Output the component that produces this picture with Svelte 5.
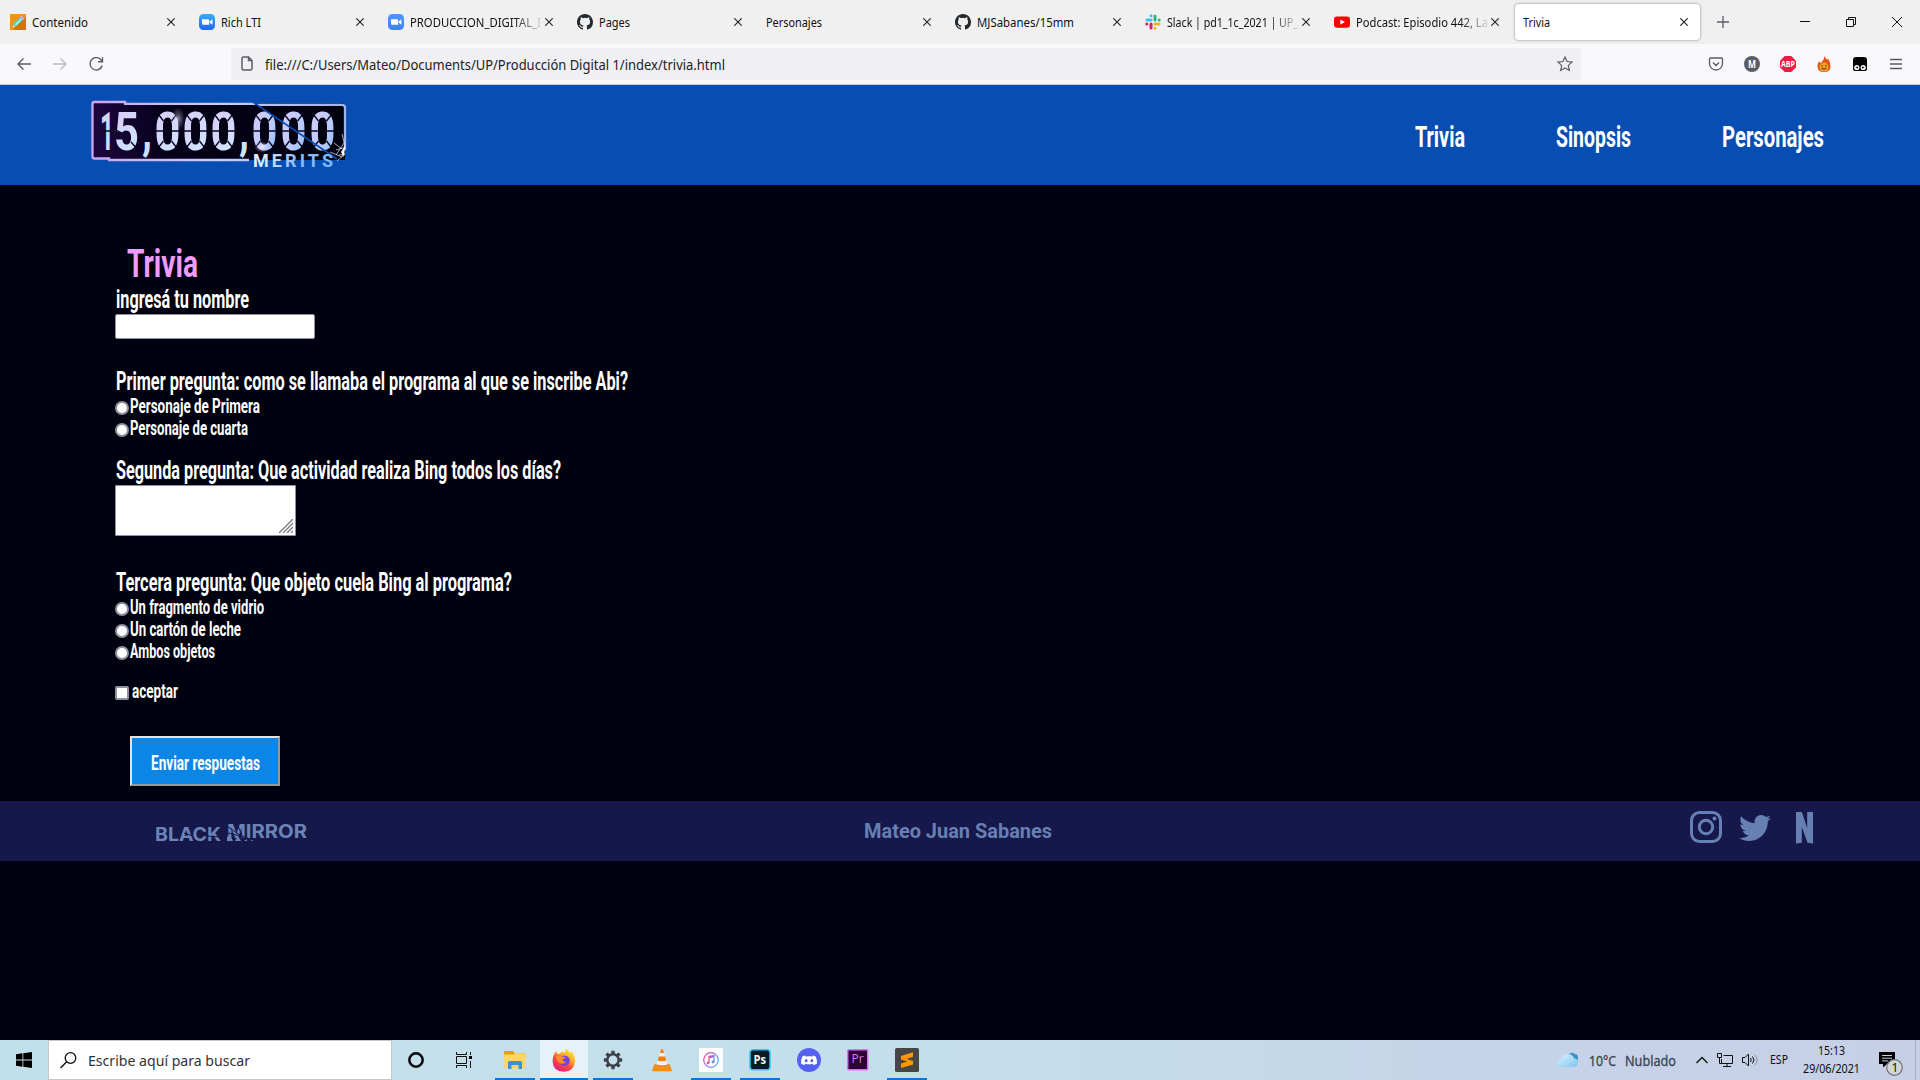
<script>
  const tabs = [
    { icon: 'pencil', text: 'Contenido', w: 56 },
    { icon: 'zoom', text: 'Rich LTI', w: 40 },
    { icon: 'zoom2', text: 'PRODUCCION_DIGITAL_I', w: 131, fade: true },
    { icon: 'github', text: 'Pages', w: 31 },
    { icon: '', text: 'Personajes', w: 56 },
    { icon: 'github', text: 'MJSabanes/15mm', w: 97 },
    { icon: 'slack', text: 'Slack | pd1_1c_2021 | UP_', w: 131, fade: true },
    { icon: 'youtube', text: 'Podcast: Episodio 442, La', w: 132, fade: true },
    { icon: '', text: 'Trivia', w: 27, active: true }
  ];
  const apps = [
    { icon: 'explorer', open: true },
    { icon: 'firefox', open: true, active: true },
    { icon: 'gear', open: true },
    { icon: 'vlc' },
    { icon: 'itunes', open: true },
    { icon: 'ps', open: true },
    { icon: 'discord' },
    { icon: 'pr' },
    { icon: 'sublime', open: true }
  ];
  const first = [['Personaje de Primera', 130], ['Personaje de cuarta', 118]];
  const third = [['Un fragmento de vidrio', 134], ['Un cartón de leche', 111], ['Ambos objetos', 85]];
  const digits = [
    ['5', 114, 25], ['0', 154.5, 26], ['0', 182.5, 26], ['0', 210.5, 26],
    ['0', 251.5, 26], ['0', 280.5, 26], ['0', 309.5, 26]
  ];
  const teeth = [0, 45, 90, 135, 180, 225, 270, 315];
</script>

{#snippet fit(text, w, h, base, size, cls)}
  <svg class="fit {cls}" width={w} height={h}>
    <text x="0" y={base} font-size={size} textLength={w} lengthAdjust="spacingAndGlyphs">{text}</text>
  </svg>
{/snippet}

{#snippet favicon(name)}
  <svg class="favicon" width="16" height="16" viewBox="0 0 16 16">
    {#if name === 'pencil'}
      <rect width="16" height="16" fill="#f39314" />
      <path d="M16 4v12H3L12 3z" fill="#cf7508" />
      <path d="M2.5 13.5l1-4 7-7 3 3-7 7z" fill="#55c9b4" />
      <path d="M4.5 10.5l6.5-6.5 1.3 1.3-6.4 6.5z" fill="#a9efdc" />
      <path d="M10 3l1.5-1.6 3 3L13 6z" fill="#d9a6ee" />
      <path d="M2.5 13.5l.7-2.6 2 2z" fill="#f5e1c2" />
    {:else if name === 'zoom' || name === 'zoom2'}
      <defs><linearGradient id="g{name}" x2="0" y2="1"><stop stop-color={name === 'zoom' ? '#30aefc' : '#4a97ff'} /><stop offset="1" stop-color={name === 'zoom' ? '#2365f5' : '#3d82f7'} /></linearGradient></defs>
      <rect width="16" height="16" rx="4.5" fill="url(#g{name})" />
      <path d="M3 5.2h6q1.2 0 1.2 1.2v4.4H4.3Q3 10.8 3 9.5zM10.8 7.2L13.5 5.2v5.5l-2.7-1.9z" fill="#fff" />
    {:else if name === 'github'}
      <path fill="#24292e" d="M8 0C3.58 0 0 3.58 0 8c0 3.54 2.29 6.53 5.47 7.59.4.07.55-.17.55-.38 0-.19-.01-.82-.01-1.49-2.01.37-2.53-.49-2.69-.94-.09-.23-.48-.94-.82-1.13-.28-.15-.68-.52-.01-.53.63-.01 1.08.58 1.23.82.72 1.21 1.87.87 2.33.66.07-.52.28-.87.51-1.07-1.78-.2-3.64-.89-3.64-3.95 0-.87.31-1.59.82-2.15-.08-.2-.36-1.02.08-2.12 0 0 .67-.21 2.2.82a7.4 7.4 0 014 0c1.53-1.04 2.2-.82 2.2-.82.44 1.1.16 1.92.08 2.12.51.56.82 1.27.82 2.15 0 3.07-1.87 3.75-3.65 3.95.29.25.54.73.54 1.48 0 1.07-.01 1.93-.01 2.2 0 .21.15.46.55.38A8.01 8.01 0 0016 8c0-4.42-3.58-8-8-8z" />
    {:else if name === 'slack'}
      <g stroke-width="3" stroke-linecap="round">
        <path d="M6 1.8v0M2 6h4" stroke="#36c5f0" /><path d="M10 2v4M14.2 6v0" stroke="#2eb67d" />
        <path d="M10 10h4M10 14.2v0" stroke="#ecb22e" /><path d="M6 10v4M1.8 10v0" stroke="#e01e5a" />
      </g>
    {:else if name === 'youtube'}
      <rect y="2.4" width="16" height="11.4" rx="3" fill="#f00" /><path d="M6.3 5.4v5.4L11 8.1z" fill="#fff" />
    {/if}
  </svg>
{/snippet}

{#snippet app(name)}
  <svg width="24" height="24" viewBox="0 0 24 24">
    {#if name === 'explorer'}
      <path d="M1.2 3h9l1.5 2.5H22.5V9H1.2z" fill="#dea20a" /><path d="M1.2 6.5H11l1-1h10.5V20.5H1.2z" fill="#ffd664" />
      <path d="M5 21v-6.5q0-1.5 1.5-1.5h11q1.5 0 1.5 1.5V21h-3.5v-4h-7v4z" fill="#3c91d0" />
    {:else if name === 'firefox'}
      <defs>
        <linearGradient id="ffa" x1=".85" y1="0" x2=".2" y2="1"><stop stop-color="#fff44f" /><stop offset=".35" stop-color="#ffae20" /><stop offset=".62" stop-color="#ff4840" /><stop offset="1" stop-color="#e31587" /></linearGradient>
      </defs>
      <path d="M2.5 5.5Q3.5 3.5 4 3l1.5 3 2.5-.5Q9 3.5 11 3q-.5 1 0 2 2-.3 3-4.5 2.5 1.5 4 4.5l1-2q4.5 4 4 10.5-.8 9.8-11 10.3Q1 23.500.6 13.500.5 8.500 2.500 5.500z" fill="url(#ffa)" />
      <circle cx="12.500" cy="12.800" r="5.300" fill="#7545dd" /><path d="M4 8q4-1.500 6 .8h3.500q-.3 2-3 2.700.5 2.500 3.500 2.500-3 3-6.500 1Q4.500 13 4 8z" fill="#ff8f25" />
    {:else if name === 'gear'}
      <g fill="#3b4147">{#each teeth as a}<rect x="10.300" y="2.800" width="3.400" height="4" rx=".6" transform="rotate({a} 12 12)" />{/each}</g>
      <circle cx="12" cy="12" r="5.700" fill="none" stroke="#3b4147" stroke-width="2.500" />
    {:else if name === 'vlc'}
      <path d="M4.500 16h15l2.500 6.500q0 .7-1 .7H3q-1 0-1-.7z" fill="#f78c12" /><path d="M11 1.500q1-1 2 0L18 18q-6 3-12 0z" fill="#f2eee9" />
      <path d="M11 1.500q1-1 2 0l1 3.500h-4zM8.900 8.500h6.200l1.200 4q-4.300 1.500-8.600 0z" fill="#ef7d08" /><path d="M6.500 16.500q5.500 2 11 0l.5 1.500q-6 3-12 0z" fill="#ef7d08" />
    {:else if name === 'itunes'}
      <defs><linearGradient id="it" x2="1" y2=".6"><stop stop-color="#ed5078" /><stop offset=".5" stop-color="#a865db" /><stop offset="1" stop-color="#4daaf0" /></linearGradient></defs>
      <rect width="24" height="24" fill="#fff" /><circle cx="12" cy="12" r="7.300" fill="none" stroke="url(#it)" stroke-width="1.200" />
      <path d="M10 15V8.500l5-1V14M10 9.500l5-1" fill="none" stroke="url(#it)" stroke-width="1.300" /><circle cx="9" cy="15" r="1.400" fill="#d55aa5" /><circle cx="14" cy="14" r="1.400" fill="#758be5" />
    {:else if name === 'ps'}
      <rect x="2" y="1.800" width="20" height="20" rx="3" fill="#061d26" stroke="#2bc4f3" stroke-width="1.500" /><text x="5.500" y="15.800" font-size="12" textLength="12.500" lengthAdjust="spacingAndGlyphs" fill="#eefaff" class="bold">Ps</text>
    {:else if name === 'discord'}
      <circle cx="12" cy="12" r="12" fill="#5562f0" />
      <path d="M8 7.500q-2 .4-2.700 1Q3.800 12 4 15.500q1.500 1.300 3.500 1.500l.8-1.300q3.700 1 7.400 0l.8 1.300q2-.2 3.500-1.500.2-3.500-1.300-7-.7-.6-2.700-1l-.6 1q-3.400-.5-6.800 0z" fill="#fff" /><ellipse cx="9.200" cy="12.700" rx="1.400" ry="1.600" fill="#5562f0" /><ellipse cx="14.800" cy="12.700" rx="1.400" ry="1.600" fill="#5562f0" />
    {:else if name === 'pr'}
      <rect x="1.700" y="1.700" width="20" height="20" rx="1" fill="#2a0133" stroke="#e06cf7" stroke-width="1.500" /><text x="5.500" y="15" font-size="12" textLength="12" lengthAdjust="spacingAndGlyphs" fill="#e378f7">Pr</text>
    {:else if name === 'sublime'}
      <rect width="24" height="24" rx="1.500" fill="#464646" /><path d="M6 8l12-3.800v4.500L11.500 11 18 13v3.500L6 20v-4.500l6.500-2L6 11.500z" fill="#ff9800" />
    {/if}
  </svg>
{/snippet}

{#snippet radio(text, w)}
  <label class="option"><span class="dot"></span>{@render fit(text, w, 22, 16, 19.5, 'game')}</label>
{/snippet}

<div class="screen">
  <div class="tabbar">
    {#each tabs as t}
      <div class="tab" class:active={t.active}>
        {#if t.icon}{@render favicon(t.icon)}{/if}
        <div class="tabtext" class:fade={t.fade}>{@render fit(t.text, t.w, 36, 23, 12, 'ui')}</div>
        <svg class="close" width="8" height="8" viewBox="0 0 8 8"><path d="M.3.3l7.400 7.400M7.700.3L.3 7.700" /></svg>
      </div>
    {/each}
    <svg class="plus" width="12" height="12" viewBox="0 0 12 12"><path d="M6 0v12M0 6h12" /></svg>
    <div class="controls">
      <svg width="10" height="10" viewBox="0 0 10 10"><path d="M0 4.500h10" /></svg>
      <svg width="10" height="10" viewBox="0 0 10 10"><path d="M2.500 2.500v-2h7v7h-2M.5 2.500h7v7h-7z" /></svg>
      <svg width="10" height="10" viewBox="0 0 10 10"><path d="M0 0l10 10M10 0L0 10" /></svg>
    </div>
  </div>

  <div class="toolbar">
    <svg class="nav" width="14" height="14" viewBox="0 0 14 14"><path d="M14 7H1M6.500 1.500L1 7l5.500 5.500" /></svg>
    <svg class="nav dim" width="14" height="14" viewBox="0 0 14 14"><path d="M0 7h13M7.500 1.500L13 7l-5.500 5.500" /></svg>
    <svg class="nav" width="15" height="14" viewBox="0 0 15 14"><path d="M12.800 4A6.200 6.200 0 1 0 13.200 8.500M9 4.800h4.500V.2" /></svg>
    <div class="url">
      <svg width="12" height="15" viewBox="0 0 12 15"><path d="M1 2.500Q1 1 2.500 1H7.500L11 4.500v8Q11 14 9.500 14h-7Q1 14 1 12.500zM7.500 1v3.500H11" /></svg>
      {@render fit('file:///C:/Users/Mateo/Documents/UP/Producción Digital 1/index/trivia.html', 460, 32, 22, 13.5, 'ui address')}
      <svg class="star" width="16" height="16" viewBox="0 0 16 16"><path d="M8 1l2 4.500 5 .6-3.700 3.300 1 5L8 12l-4.300 2.400 1-5L1 6.100l5-.6z" /></svg>
    </div>
    <div class="extensions">
      <svg width="16" height="16" viewBox="0 0 16 16"><path d="M2.500 2h11q1 0 1 1v4.500a6.500 6.500 0 0 1-13 0V3q0-1 1-1zM5 6.500l3 3 3-3" fill="none" stroke="#5b5b66" stroke-width="1.300" /></svg>
      <svg width="16" height="16" viewBox="0 0 16 16"><circle cx="8" cy="8" r="8" fill="#5b5b66" /><text x="4" y="12" font-size="11" textLength="8" lengthAdjust="spacingAndGlyphs" fill="#fff" class="bold">M</text></svg>
      <svg width="16" height="16" viewBox="0 0 16 16"><path d="M4.700 0h6.600L16 4.700v6.600L11.300 16H4.700L0 11.300V4.700z" fill="#ed1e45" /><text x="1" y="11.200" font-size="8.500" textLength="14" lengthAdjust="spacingAndGlyphs" fill="#fff" class="bold">ABP</text></svg>
      <svg width="16" height="16" viewBox="0 0 16 16"><path d="M8.500 0q1 2.500 3 4 .5-1 .2-2Q14.500 6 14.500 10q0 6-6.500 6T1.500 10q0-2.500 1.800-5 .2 1.300 1 2Q8 4.500 8.500 0z" fill="#e4521b" /><circle cx="8" cy="11" r="4.500" fill="#f7a120" /><path d="M6 9v1.500M10 9v1.500M5.500 12q2.500 2.500 5 0" stroke="#4c2510" fill="none" /></svg>
      <svg width="16" height="16" viewBox="0 0 16 16"><path d="M1 4q0-3 3-3h8q3 0 3 3v9q0 2-2 2H3q-2 0-2-2z" fill="#050505" /><circle cx="4.800" cy="11.500" r="2.600" fill="#fff" /><circle cx="11.200" cy="11.500" r="2.600" fill="#fff" /><circle cx="5.200" cy="11.500" r="1" /><circle cx="10.800" cy="11.500" r="1" /></svg>
      <svg width="16" height="16" viewBox="0 0 16 16"><path d="M2 3.500h12M2 8h12M2 12.500h12" stroke="#5b5b66" stroke-width="1.300" /></svg>
    </div>
  </div>

  <header>
    <svg class="merits" width="260" height="72" viewBox="90 98 260 72">
      <defs>
        <linearGradient id="frame" x2="1"><stop stop-color="#caa6f0" /><stop offset=".5" stop-color="#c8cdfa" /><stop offset="1" stop-color="#9eb4ef" /></linearGradient>
        <linearGradient id="panel" x2="1"><stop stop-color="#1d0640" /><stop offset=".3" stop-color="#050118" /><stop offset="1" stop-color="#02020e" /></linearGradient>
        <linearGradient id="digit" x2=".4" y2="1"><stop stop-color="#d9c8f5" /><stop offset="1" stop-color="#cfe4ff" /></linearGradient>
        <linearGradient id="digitb" x2="1" y2="1"><stop stop-color="#d9ccf9" /><stop offset=".6" stop-color="#bacbfb" /><stop offset="1" stop-color="#78b4f5" /></linearGradient>
        <linearGradient id="merits" x2="1"><stop stop-color="#eef6ff" /><stop offset=".55" stop-color="#8fbcfa" /><stop offset="1" stop-color="#7bb8f7" /></linearGradient>
        <radialGradient id="glow"><stop stop-color="#fff" /><stop offset=".4" stop-color="#e8ddff" stop-opacity=".5" /><stop offset="1" stop-color="#cdb6ff" stop-opacity="0" /></radialGradient>
      </defs>
      <path d="M94 102H125v1.500H343q2 0 2 2V160H250L109 160V158.500H94q-2 0-2-2V104q0-2 2-2z" fill="url(#panel)" />
      <path d="M249 160H109V158.500H94.500q-2 0-2-2V104q0-2 2-2H125v1.800H255M257 104.800H342q3 0 3 3V150" fill="none" stroke="url(#frame)" stroke-width="2.300" />
      <g class="digits" font-size="53">
        <text x="100" y="150" textLength="14" lengthAdjust="spacingAndGlyphs" fill="url(#digit)">1</text>
        {#each digits as [d, x, w]}
          <text {x} y="150" textLength={w} lengthAdjust="spacingAndGlyphs" fill={x > 250 ? 'url(#digitb)' : 'url(#digit)'}>{d}</text>
        {/each}
        <text x="142" y="148" textLength="10" lengthAdjust="spacingAndGlyphs" fill="#cfe0ff">,</text><text x="239" y="148" textLength="10" lengthAdjust="spacingAndGlyphs" fill="#cfe0ff">,</text>
      </g>
      <g stroke="#07031c" stroke-width="1.300">
        {#each digits as [d, x]}
          {#if d === '0'}<path d="M{x} 131h9M{x + 17} 131h9M{x + 2} 112l7 9M{x + 24} 112l-7 9M{x + 2} 150l7-9M{x + 24} 150l-7-9" />{/if}
        {/each}
        <path d="M104 131h10M138 150l-7-8M116 130l6 3" />
      </g>
      <path d="M253 102l84 57" stroke="#084db2" stroke-width="1.700" />
      <ellipse cx="178" cy="119" rx="7" ry="12" fill="url(#glow)" opacity=".6" /><ellipse cx="262" cy="147" rx="8" ry="6" fill="url(#glow)" opacity=".8" />
      <path d="M334 143l8 6M336 150l10-3M330 152l12 5M344 143l-8 12M337 161l8-7-6 1M342 134l3 12-3 10" fill="none" stroke="#e8eaff" stroke-width=".7" />
      <path d="M341 152l4-6-1 11z" fill="#fff" />
      <text x="253" y="167" font-size="18" textLength="80" fill="url(#merits)" class="meritstext">MERITS</text>
    </svg>
    <nav>
      {@render fit('Trivia', 50, 40, 27, 29, 'game')}
      {@render fit('Sinopsis', 75, 40, 27, 29, 'game')}
      {@render fit('Personajes', 102, 40, 27, 29, 'game')}
    </nav>
  </header>

  <main>
    <div class="title">{@render fit('Trivia', 71, 47, 37, 39, 'game pink')}</div>
    {@render fit('ingresá tu nombre', 133, 27, 21, 25, 'game')}
    <div class="input"></div>
    <section class="first">
      {@render fit('Primer pregunta: como se llamaba el programa al que se inscribe Abi?', 512, 30, 23, 25, 'game')}
      {#each first as [t, w]}{@render radio(t, w)}{/each}
    </section>
    <section class="second">
      {@render fit('Segunda pregunta: Que actividad realiza Bing todos los días?', 445, 29, 23, 25, 'game')}
      <div class="textarea"><svg width="14" height="14" viewBox="0 0 14 14"><path d="M0 14L14 0M4 14L14 4M8 14l6-6M12 14l2-2" stroke="#777784" stroke-width="1.300" /></svg></div>
    </section>
    <section class="third">
      {@render fit('Tercera pregunta: Que objeto cuela Bing al programa?', 396, 30, 23, 25, 'game')}
      {#each third as [t, w]}{@render radio(t, w)}{/each}
    </section>
    <label class="option accept"><span class="box"></span>{@render fit('aceptar', 46, 22, 16, 19.5, 'game')}</label>
    <div class="send">{@render fit('Enviar respuestas', 109, 46, 32, 19.5, 'game')}</div>
  </main>

  <footer>
    <div class="mirror">
      <svg width="152" height="24" viewBox="0 0 152 24">
        <g fill="#6b84b6" class="mirrortext" font-size="19">
          <text x="-1" y="19" textLength="66" lengthAdjust="spacingAndGlyphs">BLACK</text>
          <text x="71" y="16" textLength="80" lengthAdjust="spacingAndGlyphs">MIRROR</text>
        </g>
        <path d="M28 11l9 3M50 14l16 1M71 4l14 10M72 11l20 5M82 4l6 14" stroke="#16174b" stroke-width="1" />
        <path d="M71 19v-4l3-2 3 6zM79 19l3-5 3 5zM88 19h3v-2zM94 19h3v-1z" fill="#6b84b6" />
      </svg>
    </div>
    {@render fit('Mateo Juan Sabanes', 188, 30, 22, 19.5, 'author')}
    <div class="social">
      <svg width="32" height="32" viewBox="0 0 32 32"><rect x="1.500" y="1.500" width="29" height="29" rx="8" fill="none" stroke="#6780b3" stroke-width="3" /><circle cx="16" cy="16" r="6.700" fill="none" stroke="#6780b3" stroke-width="3" /><circle cx="24.500" cy="7.500" r="2" fill="#6780b3" /></svg>
      <svg class="bird" width="32" height="32" viewBox="0 0 512 512"><path fill="#6780b3" d="M459.370 151.716c.325 4.548.325 9.097.325 13.645 0 138.720-105.583 298.558-298.558 298.558-59.452 0-114.680-17.219-161.137-47.106 8.447.974 16.568 1.299 25.340 1.299 49.055 0 94.213-16.568 130.274-44.832-46.132-.975-84.792-31.188-98.112-72.772 6.498.974 12.995 1.624 19.818 1.624 9.421 0 18.843-1.300 27.614-3.573-48.081-9.747-84.143-51.980-84.143-102.985v-1.299c13.969 7.797 30.214 12.670 47.431 13.319-28.264-18.843-46.781-51.005-46.781-87.391 0-19.492 5.197-37.360 14.294-52.954 51.655 63.675 129.300 105.258 216.365 109.807-1.624-7.797-2.599-15.918-2.599-24.040 0-57.828 46.782-104.934 104.934-104.934 30.213 0 57.502 12.670 76.670 33.137 23.715-4.548 46.456-13.320 66.599-25.340-7.798 24.366-24.366 44.833-46.132 57.827 21.117-2.273 41.584-8.122 60.426-16.243-14.292 20.791-32.161 39.308-52.628 54.253z" /></svg>
      <svg class="netflix" width="17" height="32" viewBox="0 0 17 32"><path d="M0 0h5.800l5.400 16V0H17v31.500l-5.500-.8L5.800 15v15.800L0 31.500z" fill="#6780b3" /></svg>
    </div>
  </footer>

  <div class="spacer"></div>

  <div class="taskbar">
    <div class="start"><svg width="16" height="16" viewBox="0 0 16 16"><path d="M0 2.200L6.500 1.300v6.200H0zM7.300 1.200L16 0v7.500H7.300zM0 8.400h6.500v6.300L0 13.800zM7.300 8.400H16V16l-8.700-1.200z" /></svg></div>
    <div class="search">
      <svg width="17" height="17" viewBox="0 0 17 17"><circle cx="10.500" cy="6" r="5.300" fill="none" stroke="#111" stroke-width="1.300" /><path d="M6.700 9.700L.5 16" stroke="#111" stroke-width="1.400" /></svg>
      {@render fit('Escribe aquí para buscar', 162, 38, 25, 15, 'ui query')}
    </div>
    <div class="slot"><svg width="18" height="18" viewBox="0 0 18 18"><circle cx="9" cy="9" r="6.700" fill="none" stroke="#080808" stroke-width="2.500" /></svg></div>
    <div class="slot view"><svg width="16" height="16" viewBox="0 0 16 16"><path d="M.5 0v2.500h10V0M.5 16v-2.500h10V16M.5 4.500h10v7H.5zM14.500 0v3M14.500 9v7" fill="none" stroke="#111" /><path d="M13 4h3v3h-3z" /></svg></div>
    {#each apps as a}
      <div class="app" class:current={a.active} class:open={a.open}>{@render app(a.icon)}</div>
    {/each}
    <div class="tray">
      <svg class="cloud" width="22" height="16" viewBox="0 0 22 16"><defs><linearGradient id="cl" x2="1" y2="1"><stop stop-color="#d9f5ff" /><stop offset="1" stop-color="#80c3ec" /></linearGradient></defs><path d="M11 3Q14-1 18 2q3 0 3 4 0 5-3 6z" fill="#3f91cb" /><path d="M4 15Q0 15 0 11.500T4.500 8Q5 2 10.500 2t6.500 4.500q4 0 4 4T17 15z" fill="url(#cl)" /></svg>
      {@render fit('10°C', 27, 40, 26, 13.5, 'ui weather')}
      {@render fit('Nublado', 51, 40, 26, 13.5, 'ui weather')}
      <svg class="chevron" width="12" height="8" viewBox="0 0 12 8"><path d="M.5 7L6 1.500 11.500 7" fill="none" stroke="#111" stroke-width="1.300" /></svg>
      <svg class="net" width="16" height="15" viewBox="0 0 16 15"><path d="M6.500 2.500h9v8h-11V6M10 10.500v3M6 13.500h8M.5.5h4v4h-4zM2.500 4.500v6h2" fill="none" stroke="#111" /></svg>
      <svg class="sound" width="17" height="14" viewBox="0 0 17 14"><path d="M.5 4.500H3L6.500 1v12L3 9.500H.5zM8.500 5q1.500 2 0 4M10.500 3.500q3 3.500 0 7" fill="none" stroke="#111" /><path d="M12.800 1.800q4.700 5.200 0 10.400" fill="none" stroke="#8c93a3" /></svg>
      {@render fit('ESP', 18, 40, 24, 12, 'ui esp')}
      <div class="clock">
        {@render fit('15:13', 27, 18, 15, 12, 'ui')}
        {@render fit('29/06/2021', 57, 18, 15, 12, 'ui')}
      </div>
      <svg class="action" width="25" height="26" viewBox="0 0 25 26"><path d="M0 1h16v12H8l-4 3.500V13H0z" /><path d="M3 4.500h10M3 7.200h10M3 9.900h6" stroke="#c6d1e6" /><circle cx="15.500" cy="16.500" r="7.800" fill="#d2d5da" stroke="#777" stroke-width="1.200" /><text x="12.500" y="21" font-size="12" class="ui">1</text></svg>
      <div class="peek"></div>
    </div>
  </div>
</div>

<style>
  :global(body) { margin: 0; background: #00020f; overflow: hidden; }
  .screen { width: 1920px; height: 1080px; display: flex; flex-direction: column; background: #00020f; font-family: "Open Sans", "Noto Sans", sans-serif; }
  svg { display: block; flex: none; }
  .fit { overflow: visible; }
  .ui { font-family: "Noto Sans", "Open Sans", sans-serif; fill: #111; }
  .bold { font-family: "Open Sans", sans-serif; font-weight: 700; }
  .game { font-family: Roboto, sans-serif; font-weight: 700; fill: #fff; }
  .pink { fill: #f29bff; }

  .tabbar { height: 44px; display: flex; align-items: center; background: #f0f0f0; padding-left: 2px; box-sizing: border-box; flex: none; }
  .tab { width: 185.1px; height: 36px; margin-right: 4px; padding: 0 12px 0 8px; box-sizing: border-box; display: flex; align-items: center; border-radius: 4px; }
  .tab.active { background: #fff; box-shadow: 0 0 3px #888; }
  .favicon { margin-right: 6px; }
  .tabtext { flex: 1; overflow: hidden; }
  .fade { mask-image: linear-gradient(to right, #000 77%, transparent 100%); }
  .close { stroke: #222; stroke-width: 1.1; }
  .plus { margin-left: 13px; stroke: #5b5b66; stroke-width: 1.3; fill: none; }
  .controls { display: flex; gap: 36px; margin-left: 71px; fill: none; stroke: #111; stroke-width: 1; }

  .toolbar { height: 41px; flex: none; display: flex; align-items: center; box-sizing: border-box; padding: 0 16px 1px 17px; background: #f9f9fb; border-bottom: 1px solid #c9c9cf; }
  .nav { margin-right: 22px; fill: none; stroke: #5b5b66; stroke-width: 1.4; }
  .dim { stroke: #bbbbc2; }
  .url { width: 1350px; height: 32px; margin-left: 105px; display: flex; align-items: center; box-sizing: border-box; padding: 0 8px 0 10px; background: #f0f0f4; border-radius: 4px; fill: none; stroke: #5b5b66; stroke-width: 1.5; }
  .address { margin-left: 12px; fill: #222; stroke: none; }
  .star { margin-left: auto; stroke-width: 1.2; }
  .extensions { display: flex; gap: 20px; margin-left: auto; }

  header { height: 100px; flex: none; display: flex; justify-content: space-between; background: #084db2; box-sizing: border-box; padding: 13px 96px 0 90px; }
  .digits { font-family: Roboto, sans-serif; font-weight: 700; }
  .meritstext { font-family: Roboto, sans-serif; font-weight: 700; }
  nav { display: flex; padding-top: 22px; gap: 91px; }

  main { height: 616px; flex: none; box-sizing: border-box; padding: 55px 0 0 115px; }
  main .fit { margin-left: .5px; }
  .title { padding-left: 11px; }
  .input { width: 200px; height: 25px; box-sizing: border-box; background: #fff; border: 1px solid #8f8f9d; border-radius: 2px; }
  .first { margin-top: 28px; }
  .second { margin-top: 15px; }
  .third { margin-top: 32px; }
  .option { display: flex; align-items: center; height: 22px; }
  .dot { width: 14px; height: 14px; box-sizing: border-box; border: 2px solid #8f8f9d; border-radius: 50%; background: #fff; }
  .box { width: 14px; height: 14px; box-sizing: border-box; border: 2px solid #8f8f9d; border-radius: 2px; background: #fff; margin-right: 2.5px; }
  .accept { margin-top: 18px; }
  .textarea { width: 181px; height: 51px; box-sizing: border-box; background: #fff; border: 1px solid #8f8f9d; border-radius: 1px; display: flex; justify-content: flex-end; align-items: flex-end; padding: 2px; }
  .send { width: 150px; height: 50px; box-sizing: border-box; margin: 32px 0 0 15px; border: 2px solid; border-color: #e3e3e3 #979797 #979797 #e3e3e3; background: #0c86e6; display: flex; padding-left: 18px; }

  footer { height: 60px; flex: none; display: grid; grid-template-columns: 864px 188px 1fr; background: #16174b; }
  .mirror { padding: 21px 0 0 156px; }
  .mirrortext { font-family: Inter, sans-serif; font-weight: 700; }
  .author { font-family: Roboto, sans-serif; font-weight: 700; fill: #6780b3; margin-top: 15px; }
  .social { display: flex; padding: 10px 107px 0 0; justify-content: flex-end; }
  .bird { margin: 1px 25px 0 17px; }
  .netflix { margin-top: 1px; }
  .spacer { flex: 1; }

  .taskbar { height: 40px; flex: none; display: flex; background: linear-gradient(90deg, #c1e0eb, #c4dfeb 50%, #c5d3e8 80%, #c6cfe5); }
  .start { width: 48px; display: grid; place-items: center; }
  .search { width: 344px; box-sizing: border-box; border: 1px solid #c6c6c6; background: #fff; display: flex; align-items: center; padding-left: 11px; }
  .query { margin-left: 11px; fill: #333; }
  .slot { width: 48px; display: grid; place-items: center; }
  .view { margin-right: 3px; }
  .app { width: 48px; margin-right: 1px; box-sizing: border-box; display: flex; justify-content: center; padding-top: 8px; }
  .app.open { background: linear-gradient(#0078d7, #0078d7) center bottom / 40px 2px no-repeat; }
  .app.current { background: linear-gradient(#0078d7, #0078d7) center bottom / 48px 2px no-repeat, #e6f2f8; }
  .tray { flex: 1; display: flex; align-items: center; justify-content: flex-end; }
  .weather { fill: #3c4654; stroke: #3c4654; stroke-width: .3; margin-left: 9.5px; }
  .chevron { margin-left: 20px; }
  .net { margin-left: 9px; }
  .sound { margin-left: 9px; }
  .esp { margin-left: 11px; }
  .clock { margin-left: 15px; display: flex; flex-direction: column; align-items: center; height: 40px; }
  .action { margin: 8px 0 0 19px; }
  .peek { width: 4px; height: 40px; border-left: 1px solid #a1abc0; margin-left: 11px; }
</style>
